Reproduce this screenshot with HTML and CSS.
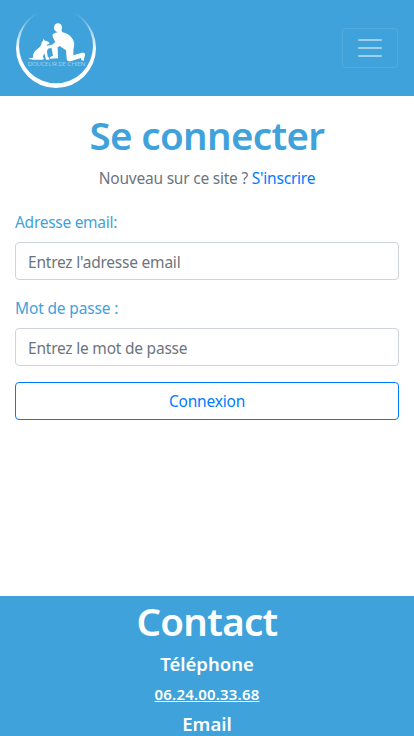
FILE: index.html
```html
<!DOCTYPE html>
<html lang="fr">
<head>
<meta charset="utf-8">
<meta name="viewport" content="width=device-width, initial-scale=1">
<title>Se connecter</title>
<link rel="stylesheet" href="styles.css">
</head>
<body>
<header class="navbar">
  <a class="brand" href="#" aria-label="Douceur de chien">
    <svg class="logo" viewBox="24 12 240 240">
      <defs>
        <linearGradient id="fade" x1="0" y1="25" x2="0" y2="140" gradientUnits="userSpaceOnUse">
          <stop offset="0" stop-color="#fff" stop-opacity="0"/>
          <stop offset=".5" stop-color="#fff" stop-opacity=".55"/>
          <stop offset="1" stop-color="#fff"/>
        </linearGradient>
      </defs>
      <path fill="url(#fade)" fill-rule="evenodd" d="M144 12a120 120 0 1 0 0 240a120 120 0 1 0 0-240zM144 14a111 112 0 1 1 0 224a111 112 0 1 1 0-224z"/>
      <ellipse fill="#fff" cx="150" cy="71" rx="12" ry="13"/>
      <path fill="#fff" d="M159 76l4 9C180 88 192 98 198 114C200 122 197 130 196 140V154L222 146C232 145 233 151 230 157L227 170C222 172 219 167 219 162L190 171C181 174 176 170 176 163L174 139L155 126L149 130L150 163L126 164C125 159 130 157 135 156L131 133L119 131C116 126 119 123 132 122L142 114L135 101C131 90 136 88 149 85z"/>
      <path fill="#fff" d="M105 112L106 104L111 110C118 110 121 113 125 117C123 121 119 121 116 123L120 127L136 125V130L120 134L117 142L119 158C124 160 127 164 123 167H114L109 148L104 159C109 161 109 166 104 167H80C76 167 67 168 60 163C66 164 73 162 76 160C74 148 80 141 89 134C98 128 101 122 101 114z"/>
      <text class="logo-text" x="59" y="186" textLength="173" lengthAdjust="spacingAndGlyphs">DOUCEUR DE CHIEN</text>
    </svg>
  </a>
  <button class="toggler" type="button" aria-label="Menu">
    <svg class="toggler-icon" viewBox="0 0 30 30"><path stroke="rgba(255,255,255,.5)" stroke-linecap="round" stroke-miterlimit="10" stroke-width="2" d="M4 7h22M4 15h22M4 23h22"/></svg>
  </button>
</header>
<main class="login">
  <h1 class="title">Se connecter</h1>
  <p class="intro">Nouveau sur ce site ? <a href="#">S'inscrire</a></p>
  <form>
    <div class="group">
      <label class="label-email" for="email">Adresse email:</label>
      <input id="email" class="field" type="email" placeholder="Entrez l'adresse email">
    </div>
    <div class="group">
      <label for="password">Mot de passe :</label>
      <input id="password" class="field" type="password" placeholder="Entrez le mot de passe">
    </div>
    <button class="submit" type="button">Connexion</button>
  </form>
</main>
<footer class="footer">
  <h2 class="contact">Contact</h2>
  <h3 class="subtitle">Téléphone</h3>
  <a class="phone" href="#">06.24.00.33.68</a>
  <h3 class="subtitle">Email</h3>
</footer>
</body>
</html>
```
FILE: styles.css
```css
* { box-sizing: border-box; }
body {
  margin: 0;
  height: 736px;
  overflow: hidden;
  display: flex;
  flex-direction: column;
  background: #fff;
  color: #6c757d;
  font: 400 15.5px/24px "Noto Sans", "Open Sans", sans-serif;
}
h1, h2, h3, p { margin: 0; }
.navbar {
  height: 96px;
  flex: none;
  padding: 8px 16px;
  display: flex;
  align-items: center;
  justify-content: space-between;
  background: #3fa2da;
}
.brand, .logo { display: block; width: 80px; height: 80px; }
.logo-text { fill: #d5ecf8; font: 300 17px "Open Sans", sans-serif; }
.toggler {
  width: 56px;
  height: 40px;
  padding: 0;
  display: flex;
  align-items: center;
  justify-content: center;
  background: transparent;
  border: 1px solid rgba(255, 255, 255, .1);
  border-radius: 4px;
}
.toggler-icon { width: 30px; height: 30px; }
.login { flex: 1; padding: 15px 15px 0; }
.title {
  color: #3fa2da;
  font-size: 38.5px;
  line-height: 48px;
  font-weight: 600;
  letter-spacing: -.65px;
  text-align: center;
  margin-bottom: 7px;
}
.intro { text-align: center; margin-bottom: 20px; letter-spacing: -.22px; }
.intro a { color: #007bff; text-decoration: none; }
.group { margin-bottom: 16px; }
.group label { display: block; height: 24px; margin-bottom: 8px; color: #3fa2da; letter-spacing: -.15px; }
.group .label-email { letter-spacing: -.28px; }
.field {
  display: block;
  width: 100%;
  height: 38px;
  padding: 7px 12px 5px;
  border: 1px solid #ced4da;
  border-radius: 4px;
  background: #fff;
  font: inherit;
  letter-spacing: -.22px;
}
.field::placeholder { color: #6c757d; opacity: 1; }
.submit {
  display: block;
  width: 100%;
  height: 38px;
  padding: 0;
  border: 1px solid #007bff;
  border-radius: 4px;
  background: transparent;
  color: #007bff;
  font: inherit;
  letter-spacing: -.2px;
}
.footer {
  height: 140px;
  flex: none;
  overflow: hidden;
  text-align: center;
  background: #3fa2da;
  color: #fff;
}
.contact { font-size: 38.5px; line-height: 48px; font-weight: 600; letter-spacing: -.7px; margin: 0 0 7px; padding-top: 1px; }
.subtitle { font-size: 18.5px; line-height: 24px; font-weight: 600; }
.phone {
  display: block;
  margin: 6px 0;
  color: #fff;
  font-size: 15px;
  line-height: 24px;
  font-weight: 600;
  letter-spacing: .18px;
}
```
